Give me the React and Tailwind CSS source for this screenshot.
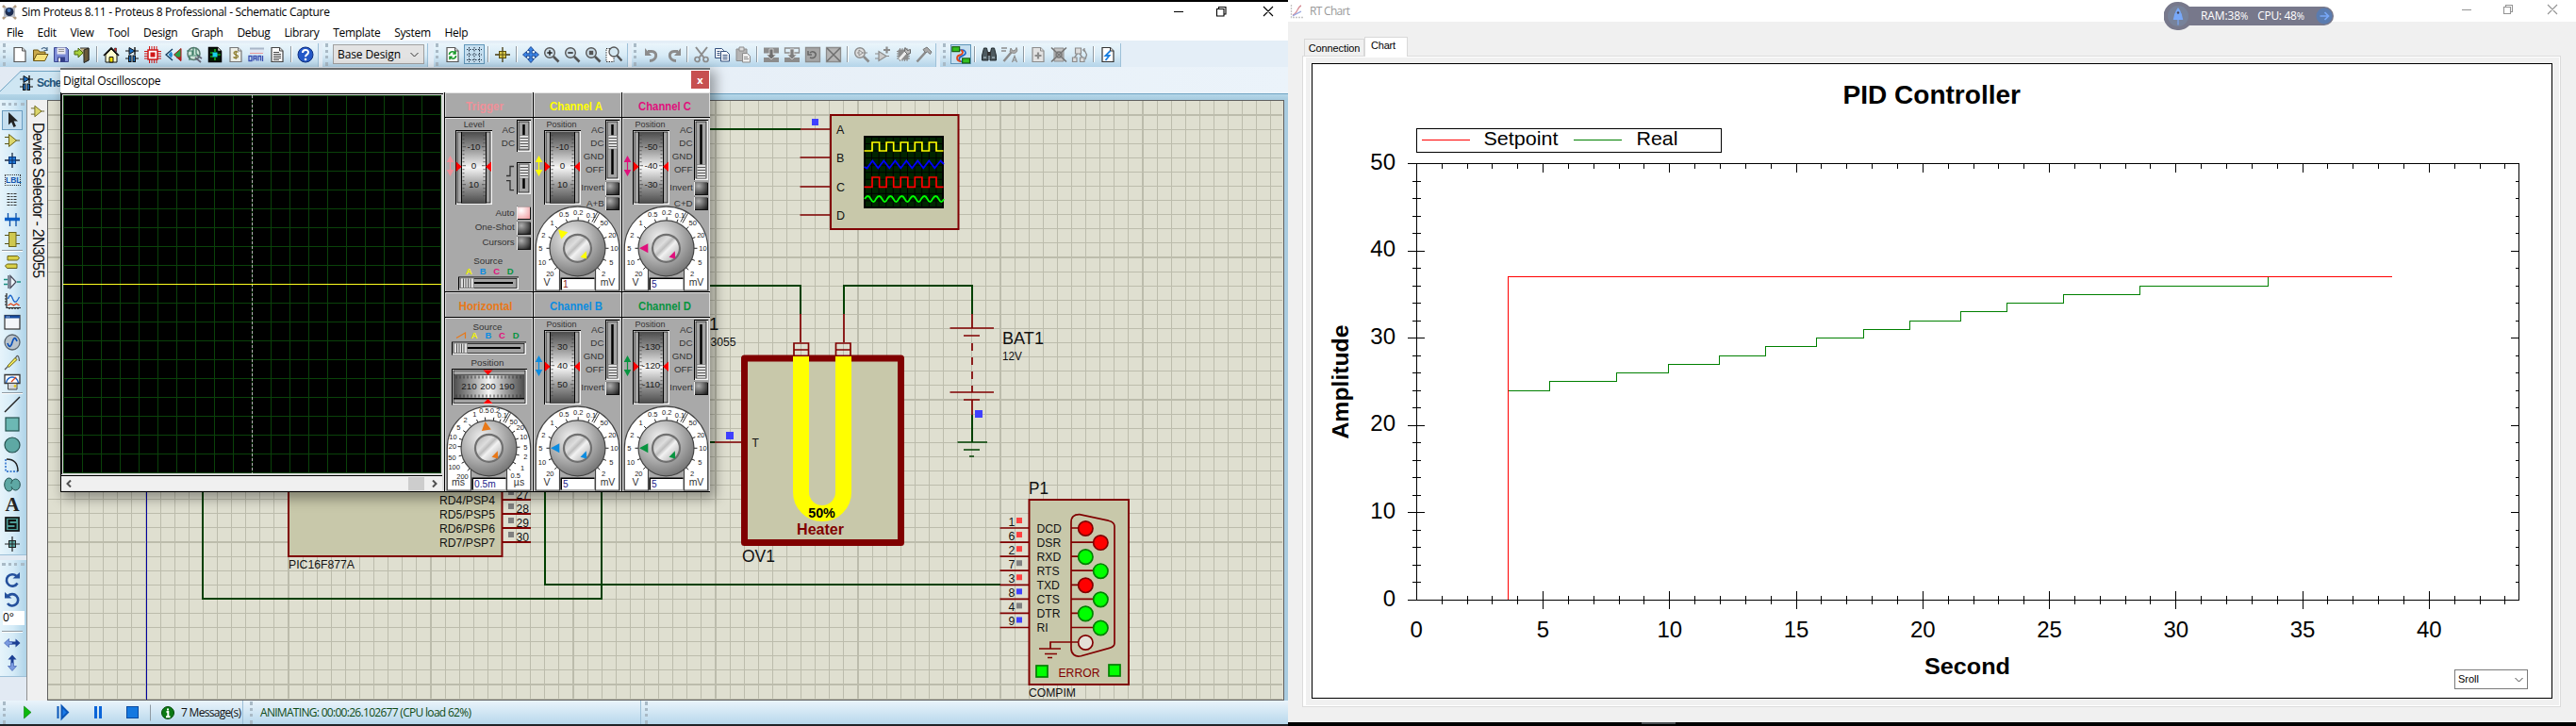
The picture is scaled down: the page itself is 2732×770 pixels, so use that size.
import React from "react";

const SANS = "font-['Liberation_Sans',sans-serif]";
const UI = "font-['Open_Sans',sans-serif]";

/* ---------- small helpers ---------- */

function Ico({ children, className = "", s = 18 }) {
  return (
    <svg width={s} height={s} viewBox="0 0 18 18" fill="none" className={"shrink-0 " + className}>
      {children}
    </svg>
  );
}

const G = "#8c8c8c";
const Loupe = ({ c = "#555", f = "#cfe0ea", children }) => (
  <Ico>
    <circle cx="7" cy="7" r="5.3" fill={f} stroke={c} strokeWidth="1.4" />
    <path d="M11 11l5.5 5.5" stroke={c} strokeWidth="2.6" />
    {children}
  </Ico>
);
const Page = ({ stroke = "#555", fill = "#fff", children }) => (
  <Ico>
    <path d="M3 1.5h8.5l3.5 3.5v11.5h-12z" fill={fill} stroke={stroke} strokeWidth="1.2" />
    <path d="M11.5 1.5v3.5h3.5" stroke={stroke} fill="#ddd" />
    {children}
  </Ico>
);
const DiodeCap = () => (
  <Ico>
    <path d="M2 5h14M2 13h4M12 13h4" stroke="#111" />
    <path d="M6 1.5l6 3.5-6 3.500z" fill="#1a6fc4" stroke="#111" />
    <path d="M12 1v8" stroke="#111" strokeWidth="1.4" />
    <rect x="5.500" y="10" width="2.500" height="6.500" fill="#1a6fc4" stroke="#111" />
    <rect x="10" y="10" width="2.500" height="6.500" fill="#1a6fc4" stroke="#111" />
  </Ico>
);

const icons = {
  new: <Page />,
  open: (
    <Ico>
      <path d="M1.500 15V4h5l1.500 2h6v3" fill="#c9a94a" stroke="#6b5413" />
      <path d="M1.500 15.500l3.500-7h12l-3.500 7z" fill="#f6e27c" stroke="#6b5413" />
      <path d="M10 3c2-2 4-2 6 1m0-3v3.500h-3.500" stroke="#4a6a8a" strokeWidth="1.200" />
    </Ico>
  ),
  save: (
    <Ico>
      <path d="M1.500 1.500h13l2 2v13h-15z" fill="#7c8cd6" stroke="#3a4690" />
      <rect x="4.500" y="1.500" width="9" height="7" fill="#e8e8f0" />
      <path d="M6 3.500h6M6 5.500h6" stroke="#999" />
      <rect x="5" y="11.500" width="8" height="5" fill="#333f88" />
      <rect x="6" y="12.500" width="2" height="4" fill="#eee" />
    </Ico>
  ),
  exit: (
    <Ico>
      <path d="M7 2h9v13h-4" fill="#c9b98a" stroke="#333" />
      <path d="M11 4l5-2v13l-5 2.500z" fill="#6b5a3a" stroke="#222" />
      <path d="M1 5h4V2l5 5-5 5V9H1z" fill="#a6d13c" stroke="#4c6a12" />
    </Ico>
  ),
  home: (
    <Ico>
      <path d="M3 9v8h12V9L9 3z" fill="#ffffd0" stroke="#111" />
      <path d="M1 10l8-8 8 8" stroke="#111" strokeWidth="1.700" />
      <path d="M12.500 2h2v4l-2-2z" fill="#d22" stroke="#111" strokeWidth=".5" />
      <path d="M7 17v-5.500h4V17z" fill="#ffe200" stroke="#111" />
    </Ico>
  ),
  diode: <DiodeCap />,
  chip: (
    <Ico>
      <path d="M5.500 0v4M8 0v4M10.500 0v4M13 0v4M5.500 14v4M8 14v4M10.500 14v4M13 14v4M0 5.500h4M0 8h4M0 10.500h4M0 13h4M14 5.500h4M14 8h4M14 10.500h4M14 13h4" stroke="#d01818" />
      <rect x="4" y="4" width="10" height="10" fill="#fff" stroke="#d01818" strokeWidth="1.500" />
      <rect x="6.500" y="6.500" width="5" height="5" fill="#d01818" />
    </Ico>
  ),
  view3d: (
    <Ico>
      <path d="M8 3L1 9l7 6" stroke="#123a5a" strokeWidth="1.300" />
      <path d="M6.500 5.500c2 2 2 5 0 7l-3-3.500z" fill="#2a8ad0" />
      <path d="M17 2.500v13L9.500 9z" fill="#2aa04a" stroke="#a11" />
      <path d="M17 11v5l-5-4z" fill="#b02020" />
    </Ico>
  ),
  globe: (
    <Ico>
      <circle cx="8.500" cy="8" r="6.500" fill="#cfe6da" stroke="#5a7a70" strokeWidth="1.500" />
      <path d="M1 5h6v5H4v5M7 10h8M8 1v8M11 2v6l4 3" stroke="#3d7d66" strokeWidth="1.200" />
      <path d="M10 12l6 5M12 10l5 3" stroke="#667" strokeWidth="1.800" />
    </Ico>
  ),
  board: (
    <Ico>
      <path d="M2.500 1.500h9l4 4v11h-13z" fill="#041a04" stroke="#000" strokeWidth="1.500" />
      <path d="M12 1l3.500 4H12z" fill="#fff" stroke="#111" strokeWidth=".7" />
      <path d="M4 7h3M4 11h3M11 9h4M9 3v3M9 12v3" stroke="#1be01b" strokeWidth="1.200" />
      <rect x="6.500" y="6.500" width="5" height="5" fill="#18d0e8" />
    </Ico>
  ),
  dollar: (
    <Page stroke="#777" fill="#eef0ea">
      <path d="M11.500 6.500c-1-1.300-4.500-1.300-4.500.8 0 2.200 4.500 1.300 4.500 3.500 0 2-3.500 2.200-5 .7M9.200 4.700v9" stroke="#8b7a2a" strokeWidth="1.200" />
    </Page>
  ),
  code: (
    <Ico>
      <path d="M2 2h15v5H2z" fill="#dde6f2" />
      <path d="M2 2.500h15" stroke="#a9b6c8" strokeWidth="2" />
      <path d="M2 7.500h14" stroke="#e89a9a" />
      <path d="M1 10.500h3v5h-3zM6 15.500v-5h3v5M11 15.500v-5h2.500v5M15.500 10v6M6 13h3" stroke="#3a4fb0" strokeWidth="1.300" />
    </Ico>
  ),
  text: (
    <Page stroke="#444">
      <path d="M5 6.500h6M5 8.500h8M5 10.500h8M5 12.500h8M5 14.500h6" stroke="#444" />
    </Page>
  ),
  help: (
    <Ico>
      <circle cx="9" cy="9" r="8" fill="#2458c8" stroke="#0d2f80" />
      <path d="M6 7c0-4 6-4 6-.5C12 9 9 8.700 9 11.300" stroke="#fff" strokeWidth="2" />
      <circle cx="9" cy="14" r="1.300" fill="#fff" />
    </Ico>
  ),
  refresh: (
    <Page>
      <path d="M5.500 9c0-3.500 4-4 6-2m.5-2v3H9.300M12.500 10c0 3.500-4 4-6 2m-.5 2.200v-3h2.700" stroke="#1a9a2a" strokeWidth="1.600" />
    </Page>
  ),
  grid: (
    <Ico>
      <path d="M3.500 1v16M9 1v16M14.500 1v16M1 3.500h16M1 9h16M1 14.500h16" stroke="#234" strokeDasharray="1.500 1.500" />
    </Ico>
  ),
  origin: (
    <Ico>
      <path d="M9 1v16M1 9h16" stroke="#443a10" strokeWidth="1.300" />
      <rect x="5.500" y="5.500" width="7" height="7" fill="#d8c84a" stroke="#5a4e10" />
      <path d="M9 5v8M5 9h8" stroke="#5a4e10" />
    </Ico>
  ),
  pan: (
    <Ico>
      <path d="M9 .5l3.500 4h-2.300v3.300h3.300V5.500l4 3.500-4 3.500v-2.300h-3.300v3.300h2.300L9 17.500l-3.500-4h2.300v-3.300H4.500v2.300L.5 9l4-3.500v2.300h3.300V4.500H5.500z" fill="#3a86e8" stroke="#173f8a" strokeWidth=".9" />
    </Ico>
  ),
  zin: <Loupe><path d="M4.300 7h5.400M7 4.300v5.400" stroke="#222" strokeWidth="1.500" /></Loupe>,
  zout: <Loupe><path d="M4.300 7h5.400" stroke="#222" strokeWidth="1.500" /></Loupe>,
  zall: <Loupe><rect x="4.800" y="4.800" width="4.400" height="4.400" fill="#555" /></Loupe>,
  zarea: (
    <Ico>
      <path d="M1 2.500h8v14h-8z" fill="#fff" stroke="#222" strokeDasharray="1.300 1.300" />
      <circle cx="9" cy="6" r="5" fill="#d5e8f2" stroke="#555" strokeWidth="1.300" />
      <path d="M12.500 10l5 5.500" stroke="#555" strokeWidth="2.500" />
    </Ico>
  ),
  undo: <Ico><path d="M6 15.500c8 0 9-10 2-10H4" stroke={G} strokeWidth="3" /><path d="M1 2v8h7z" fill={G} /></Ico>,
  redo: <Ico><path d="M12 15.500c-8 0-9-10-2-10h4" stroke={G} strokeWidth="3" /><path d="M17 2v8h-7z" fill={G} /></Ico>,
  cut: (
    <Ico>
      <path d="M3 1l8.500 11M15 1L6.500 12" stroke={G} strokeWidth="2" />
      <circle cx="4.500" cy="14" r="2.500" stroke={G} strokeWidth="1.700" />
      <circle cx="13.500" cy="14" r="2.500" stroke={G} strokeWidth="1.700" />
    </Ico>
  ),
  copy: (
    <Ico>
      <path d="M1.500 2.500h7l2 2v8h-9z" fill="#f4f6fa" stroke="#34507c" />
      <path d="M7.500 5.500h6l3 3v7.500h-9z" fill="#f4f6fa" stroke="#34507c" />
      <path d="M3.500 5.500h3M3.500 7.500h3M3.500 9.500h3M9.500 9.500h5M9.500 11.500h5M9.500 13.500h5" stroke="#34507c" />
    </Ico>
  ),
  paste: (
    <Ico>
      <path d="M2 3h11v12.500h-11z" fill="#b4b4b4" stroke={G} />
      <path d="M5 1h5v4h-5z" fill="#ddd" stroke={G} />
      <path d="M8.500 7.500h5l3 3v6.500h-8z" fill="#eee" stroke={G} />
      <path d="M10 11.500h4M10 13.500h5" stroke={G} />
    </Ico>
  ),
  blkcopy: <Ico><path d="M1 1.500h16v6H1zM1 12h16v5H1z" fill={G} /><path d="M7 3h4v6h3l-5 5-5-5h3z" fill="#6f6f6f" stroke="#ddd" strokeWidth=".8" /></Ico>,
  blkmove: <Ico><path d="M1.500 2h15v5H1.500z" stroke={G} strokeWidth="1.300" /><path d="M1 12h16v5H1z" fill={G} /><path d="M7 3h4v6h3l-5 5-5-5h3z" fill="#7f7f7f" stroke="#ddd" strokeWidth=".8" /></Ico>,
  blkrot: <Ico><path d="M1.500 1.500h15v15h-15z" fill="#a6a6a6" stroke={G} strokeWidth="1.300" /><path d="M6 7c3-3 7 0 6 3s-4 3-6 2M4 5v4h4" stroke="#666" strokeWidth="1.500" /></Ico>,
  blkdel: <Ico><path d="M1.500 1.500h15v15h-15z" fill="#b4b4b4" stroke={G} strokeWidth="1.300" /><path d="M2 2l14 14M16 2L2 16" stroke="#6f6f6f" strokeWidth="1.500" /></Ico>,
  pick: <Loupe c={G} f="#ddd"><path d="M4 7h2M6 4v6l4-3zM10 7h5" stroke={G} /></Loupe>,
  make: <Ico><path d="M1 8h4M1 13h4M5 5.500v10l8-5zM13 10.500h3" fill="#ccc" stroke={G} strokeWidth="1.200" /><path d="M10 4h7M13.500 .5v7" stroke={G} strokeWidth="2.200" /></Ico>,
  pack: <Ico><path d="M4 4h10v10h-10z" fill={G} stroke={G} /><path d="M2 5.500h14M2 8h14M2 10.500h14M2 13h14M5.500 2v14M8 2v14M10.500 2v14M13 2v14" stroke={G} /><path d="M5 14l8-9" stroke="#eee" strokeWidth="3" /><path d="M11 1.500l2.500 3 3-1v4l-3 1-3-3z" fill="#bbb" stroke="#666" /></Ico>,
  hammer: <Ico><path d="M1.500 16.500l9-10" stroke={G} strokeWidth="2.600" /><path d="M8 3.500l4-2.500 5 5-1.500 2.500-3-2.500-2 1z" fill="#a8a8a8" stroke="#777" /></Ico>,
  wire: (
    <Ico s={20}>
      <path d="M5 4.500h5.500a3 3 0 013 3c0 3-6 2-6 5.500s2 2.500 5 2.500" stroke="#1a63c8" strokeWidth="1.500" />
      <path d="M9 5c3 0 2 4-1 4.500-3 .5-4 5 1 6" stroke="#e0451a" strokeWidth="1.700" />
      <rect x=".8" y="1.500" width="7" height="4.500" fill="#33c020" stroke="#145a0c" />
      <rect x="10.500" y="12.500" width="7" height="4.500" fill="#33c020" stroke="#145a0c" />
    </Ico>
  ),
  find: (
    <Ico>
      <path d="M3.500 2h3l1.500 7v6h-6.500v-5zM14.500 2h-3L10 9v6h6.500v-5z" fill="#4d5a60" stroke="#22292d" />
      <path d="M7 6h4v4H7z" fill="#333" />
      <path d="M3 12h3M12 12h3" stroke="#9fb0b8" strokeWidth="1.500" />
    </Ico>
  ),
  prop: <Ico><path d="M0 2h6M0 5h5" stroke={G} strokeWidth="1.300" /><path d="M2.500 16l8-9.500" stroke={G} strokeWidth="2.500" /><path d="M10 2l2 3 3-1 1-2.500c2 3 0 6.500-3.500 6L9 6z" fill="#aaa" stroke={G} /><path d="M11.500 17l2.500-6.500 2.500 6.500M12.500 15h3" stroke={G} strokeWidth="1.200" /></Ico>,
  addp: <Page stroke={G} fill="#e2e2e2"><path d="M5.500 10h7M9 6.500v7" stroke={G} strokeWidth="2.200" /></Page>,
  delp: <Ico><path d="M4 2h10v14H4z" fill="#c4c4c4" stroke={G} /><circle cx="9" cy="9" r="3" stroke="#777" strokeWidth="1.500" /><path d="M1 1.500l16 15M17 1.500l-16 15" stroke="#777" strokeWidth="1.700" /></Ico>,
  tree: <Ico><path d="M4.500 2h6v6h-6zM1.500 12h4.500v4.500h-4.500zM9.500 12h4.500v4.500h-4.500z" fill="#ddd" stroke={G} strokeWidth="1.200" /><path d="M6.500 8l-3 4M9 8l3 4M12 4h2l2.500 5-1.500 5M14 2v4" stroke={G} strokeWidth="1.300" /></Ico>,
  flash: <Page stroke="#333"><path d="M11.500 5l-5 5h4l-4 5" stroke="#1a7fe0" strokeWidth="1.800" /></Page>,
  // side bar
  arrow: <Ico><path d="M5 1v13.500l3.200-3 2.300 5.500 2.500-1.200-2.400-5.200H15z" fill="#222" /></Ico>,
  amp: <Ico><path d="M1 5.500h5M1 12.500h5M12 9h5" stroke="#5a5414" /><path d="M5.500 2.500v13l8-6.500z" fill="#dcd66a" stroke="#6b6418" /></Ico>,
  junc: <Ico><path d="M9 1v16M1 9h16" stroke="#1b2a44" strokeWidth="1.300" /><rect x="5.500" y="5.500" width="7" height="7" fill="#1f78d8" stroke="#0c3c80" /><path d="M9 5v8M5 9h8" stroke="#0c2c60" /></Ico>,
  script: <Ico><path d="M3.500 3.500h11M3.500 6.500h11M3.500 9.500h11M3.500 12.500h11M3.500 15.500h11" stroke="#333" strokeDasharray="3 1 2 1" /></Ico>,
  bus: <Ico><path d="M1 8.500h16" stroke="#0c60c8" strokeWidth="3.500" /><path d="M4.500 2v6M13 2v6M6.500 9v7M13 9v7" stroke="#0c50a8" strokeWidth="1.300" /></Ico>,
  sub: <Ico><path d="M1 4.500h5M1 13.500h5M12 4.500h5M12 13.500h5" stroke="#555014" /><rect x="5.500" y="1.500" width="7.500" height="15" fill="#cfc84e" stroke="#6b6418" /></Ico>,
  term: <Ico><path d="M4 2.500h10.500l2 2-2 2.500H4zM14 11h-10.500l-2 2 2 2.500h10.500z" fill="#d8d048" stroke="#6b6418" /></Ico>,
  pin: <Ico><path d="M0 6.500h4M0 11.500h4M14 9h4" stroke="#1a8f80" strokeWidth="1.500" /><path d="M5 2v14M7 2.500v13l6-6.500z" stroke="#445" strokeWidth="1.200" fill="#eef6fa" /></Ico>,
  graph: <Ico><path d="M3 0v15.500h15M1 3h2M1 6h2M1 9h2M1 12h2M6 15v2M9 15v2M12 15v2M15 15v2" stroke="#222" strokeWidth="1.200" /><path d="M4.500 6c2-5 3-5 5 0s4 4 7-2" stroke="#1a63c8" strokeWidth="1.300" /><path d="M4.500 13l3-2 3 2 3-2 3 2" stroke="#e0451a" strokeWidth="1.300" /></Ico>,
  win: <Ico><rect x="1" y="1.500" width="16" height="14.500" fill="#f4f6fa" stroke="#333" strokeWidth="1.200" /><path d="M1 3h16" stroke="#174a9c" strokeWidth="3" /><path d="M3 3h4" stroke="#fff" strokeDasharray="1 1" /></Ico>,
  gen: <Ico><circle cx="9" cy="9" r="8" fill="#b9c3cb" stroke="#5a646c" strokeWidth="1.300" /><path d="M4 10c2 6 4 3 5-1s3-7 5-1" stroke="#0c50b8" strokeWidth="1.700" /></Ico>,
  probe: <Ico><path d="M1 17l4-4M12 6c2-5 4-5 4.500 2" stroke="#555" strokeWidth="1.200" /><path d="M4 13l8-8.500 2 2-8.500 8z" fill="#f0e85a" stroke="#6b6418" /></Ico>,
  meter: <Ico><path d="M1 1.500h16v9H1z" fill="#fff" stroke="#333" strokeWidth="1.300" /><path d="M2.500 10c2-8 11-8 13 0" stroke="#1a63c8" strokeWidth="1.300" /><path d="M8 9l5-5" stroke="#e0451a" strokeWidth="1.300" /><path d="M4.500 10.500h9.500v6.500h-9.500z" fill="#d4d8dc" stroke="#444" /><circle cx="12" cy="13.500" r="1.400" fill="#e0c820" /></Ico>,
  line: <Ico><path d="M1 17L17 1" stroke="#222" strokeWidth="1.500" /></Ico>,
  rect: <Ico><rect x="2" y="2" width="14" height="14" fill="#6cb8b4" stroke="#24504e" strokeWidth="1.200" /></Ico>,
  circ: <Ico><circle cx="9" cy="9" r="8" fill="#5ea8a4" stroke="#24504e" strokeWidth="1.200" /></Ico>,
  arc: <Ico><path d="M2 3v13h13" stroke="#1a63c8" strokeWidth="1.400" strokeDasharray="2 1.500" /><path d="M3 3c8 0 12 5 12 13" stroke="#222" strokeWidth="1.400" /></Ico>,
  blob: <Ico><ellipse cx="5.500" cy="9" rx="4.800" ry="7" fill="#5ea8a4" stroke="#24504e" /><ellipse cx="12.500" cy="9" rx="4.800" ry="6" fill="#5ea8a4" stroke="#24504e" /><path d="M7 8h4v3H7z" fill="#5ea8a4" /></Ico>,
  sym: <Ico><rect x="2" y="2" width="14" height="14" fill="#4c9a94" stroke="#111" strokeWidth="1.700" /><path d="M13 5H5.500v4H12.500v4H4.500" stroke="#111" strokeWidth="2" /></Ico>,
  mark: <Ico><path d="M9 1v16M1 9h16" stroke="#222" strokeWidth="1.200" /><rect x="5.500" y="5.500" width="7" height="7" fill="#5ea8a4" stroke="#222" /><path d="M9 5v8M5 9h8" stroke="#222" /></Ico>,
  cw: <Ico><path d="M13.500 5A6.200 6.200 0 1014.500 12.500" stroke="#24509c" strokeWidth="2.600" /><path d="M9.500 7.500h7.500V1z" fill="#24509c" /></Ico>,
  ccw: <Ico><path d="M4.500 5A6.200 6.200 0 1 1 4 13" stroke="#24509c" strokeWidth="2.600" /><path d="M8.500 7.500H1V1z" fill="#24509c" /></Ico>,
  flipx: <Ico><path d="M.5 9l5-4.500v3H9v3H5.500v3z" fill="#7a9ae0" stroke="#4060b0" strokeWidth=".7" /><path d="M17.500 9l-5-4.500v3H9v3h3.500v3z" fill="#1c3f94" /></Ico>,
  flipy: <Ico><path d="M9 .5l-4.500 5h3V9h3V5.500h3z" fill="#1c3f94" /><path d="M9 17.500l-4.500-5h3V9h3v3.500h3z" fill="#7a9ae0" stroke="#4060b0" strokeWidth=".7" /></Ico>,
};

/* ---------- toolbar ---------- */

const Grip = () => (
  <span className="h-[24px] w-[3px] shrink-0 self-center border-l-[3px] border-dotted border-[#a9bac6]" />
);
const Sep = ({ w = "w-[8px]" }) => (
  <span className={"flex h-full shrink-0 items-center justify-center " + w}>
    <span className="h-[17px] w-[2px] border-l border-[#8f9aa2] bg-white" />
  </span>
);
const Btn = ({ n, on }) => (
  <span
    className={
      "flex h-[21px] w-[22px] shrink-0 items-center justify-center " +
      (on ? "border border-[#5f95b8] bg-[#c5dff0]" : "")
    }
  >
    {icons[n]}
  </span>
);
const Group = ({ className, children }) => (
  <div
    className={
      "flex h-[25px] shrink-0 items-center border-r border-[#9dc0d8] bg-linear-to-b from-[#eaf5fb] via-[#d8ebf6] to-[#b4d4e9] pb-[2px] " +
      className
    }
  >
    {children}
  </div>
);
const run = (s) => s.split(" ").map((n) => <Btn key={n} n={n} />);

function Toolbars() {
  return (
    <div className="flex h-[28px] items-end bg-[#e4eef7]">
      <Group className="w-[338px] gap-0 pl-[3px]">
        <Grip />
        <span className="w-[4px]" />
        {run("new open save exit")}
        <Sep w="w-[9px]" />
        {run("home diode chip view3d globe board dollar code text")}
        <Sep />
        <Btn n="help" />
      </Group>
      <Group className="ml-[4px] w-[112px] pl-[3px]">
        <Grip />
        <div className="ml-[5px] flex h-[21px] w-[97px] items-center justify-between border border-[#a0a0a0] bg-[#e3e3e3] pr-[5px] pl-[4px]">
          <span className={UI + " text-[12px] tracking-[-0.100px] whitespace-nowrap text-black"}>Base Design</span>
          <svg width="9" height="6" viewBox="0 0 9 6" fill="none">
            <path d="M.5 1l4 4 4-4" stroke="#333" />
          </svg>
        </div>
      </Group>
      <Group className="ml-[6px] w-[206px] pl-[2px]">
        <Grip />
        <span className="w-[4px]" />
        <Btn n="refresh" />
        <span className="w-[1px]" />
        <Btn n="grid" on />
        <Sep />
        <Btn n="origin" />
        <Sep />
        {run("pan zin zout zall zarea")}
      </Group>
      <Group className="ml-[4px] w-[323px] pl-[2px]">
        <Grip />
        <span className="w-[6px]" />
        {run("undo redo")}
        <Sep />
        {run("cut copy paste")}
        <Sep />
        {run("blkcopy blkmove blkrot blkdel")}
        <Sep />
        {run("pick make pack hammer")}
      </Group>
      <Group className="ml-[4px] w-[192px] pl-[3px]">
        <Grip />
        <span className="w-[5px]" />
        <Btn n="wire" on />
        <Sep />
        {run("find prop")}
        <Sep />
        {run("addp delp tree")}
        <Sep />
        <Btn n="flash" />
      </Group>
    </div>
  );
}

/* ---------- schematic ---------- */

const MAR = "#800000";
const GRN = "#004000";
const BODY = "#c8c8aa";
const range = (n) => Array.from({ length: n }, (_, i) => i);

const T = ({ x, y, s = 12.3, c = "#111", b, a, w, children }) => (
  <text
    x={x}
    y={y}
    fontSize={s}
    fill={c}
    fontWeight={b ? 700 : 400}
    textAnchor={a}
    {...(w ? { textLength: w, lengthAdjust: "spacingAndGlyphs" } : {})}
  >
    {children}
  </text>
);

function Schematic() {
  const ox = 51;
  const oy = 107;
  const vx = range(90).map((i) => [155 + 15.1 * (i - 6), (i - 6) % 10 === 0]).filter(([x]) => x > 51 && x < 1361);
  const hy = range(43).map((i) => [122 + 15.1 * (i - 1), (i - 1) % 10 === 0]).filter(([y]) => y < 742);
  const pins = [
    ["1", "DCD", "#ff4040", 0, "#f00"],
    ["6", "DSR", "#ff4040", 1, "#f00"],
    ["2", "RXD", "#ff4040", 0, "#0f0"],
    ["7", "RTS", "#808080", 1, "#0f0"],
    ["3", "TXD", "#ff4040", 0, "#f00"],
    ["8", "CTS", "#4040ff", 1, "#0f0"],
    ["4", "DTR", "#808080", 0, "#0f0"],
    ["9", "RI", "#4040ff", 1, "#0f0"],
  ];
  const sq = (base, top) => {
    let d = `M916.500 ${base}`;
    range(5).forEach((i) => {
      const u = 925 + i * 15.100;
      d += `H${u}V${top}h7.600V${base}`;
    });
    return d + "H1000.500";
  };
  return (
    <svg width="1310" height="635" viewBox={`${ox} ${oy} 1310 635`} className={SANS + " block"} fill="none">
      <rect x={ox} y={oy} width="1310" height="635" fill="#dfdfd0" />
      <g shapeRendering="crispEdges">
        {vx.map(([x, t]) => (
          <rect key={x} x={Math.round(x - (t ? 1 : 0.5))} y={oy} width={t ? 2 : 1} height="635" fill="#bcbcac" />
        ))}
        {hy.map(([y, t]) => (
          <rect key={y} x={ox} y={Math.round(y - (t ? 1 : 0.5))} width="1309" height={t ? 2 : 1} fill="#bcbcac" />
        ))}
      </g>

      {/* wires */}
      <path d="M155.500 500V742" stroke="#0000a0" />
      <g stroke={GRN} strokeWidth="2">
        <path d="M740 137H849M740 303H849V333M895 333V303H1031V333M1031 440V469M740 469H758" />
        <path d="M215 500V635H638V500M578 500V620H1061" />
        <path d="M1015.500 469H1047M1022 477H1039M1028 484H1033" strokeWidth="1.700" />
      </g>
      <g stroke={MAR} strokeWidth="1.700">
        <path d="M849 137H880M848.500 167H880M848.500 198H880M848.500 228H880" />
        <path d="M849 333V363M895 333V363M1031 333V348M1007.500 348H1054M1022 356H1039M1007.500 416H1054M1022 424H1039M1031 424V440" />
        <path d="M1031 364v8M1031 379v8M1031 394v8M1031 409v7M758 469H787" />
      </g>
      <g fill="#4040ff">
        <rect x="861" y="126" width="7" height="7" />
        <rect x="1034" y="435" width="8" height="8" />
        <rect x="770" y="458" width="8" height="8" />
      </g>

      {/* scope symbol */}
      <rect x="881" y="122" width="135.500" height="121" fill={BODY} stroke={MAR} strokeWidth="2" />
      {["A", "B", "C", "D"].map((l, i) => (
        <T key={l} x="887" y={142 + i * 30.300} s={12.500}>{l}</T>
      ))}
      <rect x="917" y="145" width="83" height="75" fill="#002400" stroke="#000" strokeWidth="2" />
      <path
        d={range(10).map((i) => `M${924.500 + i * 7.600} 145v75`).join("") + range(9).map((i) => `M917 ${152.500 + i * 7.550}h83`).join("")}
        stroke="#000"
      />
      <path d={sq(160, 151)} stroke="#ff0" strokeWidth="1.700" />
      <path d={"M916.500 177l3 1.500" + range(6).map((i) => `L${925.300 + i * 12} 170.500L${931.300 + i * 12} 178.300`).join("") + "L997.500 170.500L1001 174"} stroke="#00f" strokeWidth="1.800" />
      <path d={sq(198.300, 188)} stroke="#f00" strokeWidth="1.700" />
      <path d={"M917 211" + range(7).map(() => "q3.500 -6 6.500 0t5.500 0").join("")} stroke="#0f0" strokeWidth="1.800" />

      {/* controller */}
      <rect x="306" y="480" width="226.500" height="110" fill={BODY} stroke={MAR} strokeWidth="2" />
      {["RD4/PSP4", "RD5/PSP5", "RD6/PSP6", "RD7/PSP7"].map((l, i) => (
        <g key={l}>
          <T x="466" y={534.500 + i * 15} w={59}>{l}</T>
          <path d={`M532 ${530 + i * 15}h31`} stroke={MAR} strokeWidth="2" />
          <rect x="539" y={519 + i * 15} width="6" height="6" fill="#808080" />
          <T x="547.500" y={528.500 + i * 15} w={13.500}>{27 + i}</T>
        </g>
      ))}
      <T x="306" y="603" w={70}>PIC16F877A</T>

      {/* transistor label */}
      <T x="752" y="350" s={18.500}>1</T>
      <T x="753.500" y="366.500" w={27}>3055</T>

      {/* battery label */}
      <T x="1063" y="365" s={18.500} w={44}>BAT1</T>
      <T x="1063" y="382" w={21}>12V</T>

      {/* heater */}
      <rect x="789.500" y="380" width="166" height="195.500" fill={BODY} stroke={MAR} strokeWidth="7" strokeLinejoin="round" />
      <path d="M842 377v-13h15.500v13M842 371h15.500M886.500 377v-13h15.500v13M886.500 371h15.500" stroke={MAR} strokeWidth="1.700" />
      <path d="M849.500 378V522A22.500 22.500 0 0 0 894.500 522V378" stroke="#ff0" strokeWidth="17" />
      <T x="871.500" y="548.700" s={14.300} b a="middle" c="#000">50%</T>
      <T x="870" y="567" s={16} b a="middle" c={MAR}>Heater</T>
      <T x="797.500" y="473.500" s={12}>T</T>
      <T x="787" y="595.700" s={18.500} w={35}>OV1</T>

      {/* serial port */}
      <T x="1091" y="524" s={18.500} w={21}>P1</T>
      <rect x="1091.500" y="530" width="105.500" height="196" fill={BODY} stroke={MAR} strokeWidth="2" />
      <path
        d="M1136 554c0-6 3-8.500 9-8.300l30.500 6.500c4 1 6.500 3 6.500 6v124c0 3-3 4.500-5.500 5.200l-30 8.300c-6 1.500-10.500-2-10.500-8z"
        stroke={MAR}
        strokeWidth="1.700"
      />
      {pins.map(([n, l, c, r, f], i) => {
        const y = 560 + i * 15.070;
        const cx = r ? 1167.300 : 1151.300;
        return (
          <g key={n}>
            <path d={`M1060.500 ${y}H1091M1136 ${y}H${cx}`} stroke={MAR} strokeWidth="1.700" />
            <T x="1069.500" y={y - 2}>{n}</T>
            <rect x="1078" y={y - 11} width="6" height="6" fill={c} />
            <T x="1099.500" y={y + 4.700} s={12.200}>{l}</T>
            <circle cx={cx} cy={y + 0.500} r="7.700" fill={f} stroke={f === "#f00" ? MAR : "#008000"} strokeWidth="1.700" />
          </g>
        );
      })}
      <path d="M1144 681H1114V688M1102 688H1125M1108 693.500H1121M1111 697.500H1116" stroke={MAR} strokeWidth="1.700" />
      <circle cx="1151.300" cy="681.500" r="7.700" fill="#e4e0d8" stroke={MAR} strokeWidth="1.700" />
      <rect x="1099" y="706" width="12" height="12" fill="#0f0" stroke="#008000" strokeWidth="1.700" />
      <rect x="1176" y="705" width="12" height="12" fill="#0f0" stroke="#008000" strokeWidth="1.700" />
      <T x="1122.500" y="718" c={MAR} w={44}>ERROR</T>
      <T x="1091" y="739" w={50}>COMPIM</T>
    </svg>
  );
}

/* ---------- oscilloscope ---------- */

const INK = "#333";

function PanelBase({ title, color, children, tw = 56, tx = 46 }) {
  return (
    <svg width="94" height="212" viewBox="0 0 94 212" className={SANS + " block"} fill="none">
      <defs>
        <linearGradient id="wheelV" x1="0" x2="0" y1="0" y2="1">
          <stop offset="0" stopColor="#4c4c4c" />
          <stop offset=".25" stopColor="#9a9a9a" />
          <stop offset=".5" stopColor="#f6f6f6" />
          <stop offset=".75" stopColor="#9a9a9a" />
          <stop offset="1" stopColor="#4c4c4c" />
        </linearGradient>
        <linearGradient id="wheelH">
          <stop offset="0" stopColor="#4c4c4c" />
          <stop offset=".25" stopColor="#9a9a9a" />
          <stop offset=".5" stopColor="#f6f6f6" />
          <stop offset=".75" stopColor="#9a9a9a" />
          <stop offset="1" stopColor="#4c4c4c" />
        </linearGradient>
        <radialGradient id="knob" cx=".38" cy=".32" r=".75">
          <stop offset="0" stopColor="#f2f2f2" />
          <stop offset=".5" stopColor="#b2b2b2" />
          <stop offset="1" stopColor="#6e6e6e" />
        </radialGradient>
        <linearGradient id="cap" x1="0" y1="0" x2="1" y2="1">
          <stop offset="0" stopColor="#a8a8a8" />
          <stop offset=".35" stopColor="#dedede" />
          <stop offset=".45" stopColor="#bdbdbd" />
          <stop offset=".55" stopColor="#f2f2f2" />
          <stop offset="1" stopColor="#9a9a9a" />
        </linearGradient>
        <radialGradient id="btn" cx=".3" cy=".3" r=".9">
          <stop offset="0" stopColor="#b0b0b0" />
          <stop offset="1" stopColor="#222" />
        </radialGradient>
        <radialGradient id="lit" cx=".3" cy=".3" r=".9">
          <stop offset="0" stopColor="#fff" />
          <stop offset="1" stopColor="#f0a0a4" />
        </radialGradient>
      </defs>
      <rect width="94" height="212" fill="#a9a9a9" />
      <path d="M1.500 0V212M93.500 0V212" stroke="#dcdcdc" />
      <path d="M.5 0V212M0 211.500H94M0 26.500H94" stroke="#000" />
      <path d="M1.500 27.500H93M1.500 .5H93" stroke="#e2e2e2" />
      <T x={tx} y="18.500" s={13} b a="middle" c={color} w={tw}>{title}</T>
      {children}
    </svg>
  );
}

const Lbl = ({ x, y, children, a = "end", w }) => <T x={x} y={y} s={9.800} c={INK} a={a} w={w}>{children}</T>;

const PushBtn = ({ y, lit }) => (
  <g>
    <rect x="77" y={y} width="15" height="14.500" fill="#111" />
    <path d={`M77.500 ${y + 14.500}V${y + 0.500}H92`} stroke="#eee" />
    <rect x="78" y={y + 1} width="13" height="12.500" fill={lit ? "url(#lit)" : "url(#btn)"} />
  </g>
);

const Frame = ({ x, y, w, h }) => (
  <g>
    <rect x={x} y={y} width={w} height={h} fill="#000" />
    <rect x={x + 1} y={y + 1} width={w - 1} height={h - 1} fill="#f4f4f4" />
    <rect x={x + 2} y={y + 2} width={w - 4} height={h - 4} fill="#a4a4a4" stroke="#111" strokeWidth=".8" />
  </g>
);

const VSwitch = ({ y, h, hy }) => (
  <g>
    <Frame x={77} y={y} w={15} h={h} />
    <path d={`M84.500 ${y + 5}V${y + h - 6}`} stroke="#000" strokeWidth="2.500" />
    <rect x="80" y={hy} width="9.500" height="14.500" fill="#e0e0e0" stroke="#777" strokeWidth=".7" />
    <path d={`M80.500 ${hy + 3}h8.500M80.500 ${hy + 6}h8.500M80.500 ${hy + 9}h8.500M80.500 ${hy + 12}h8.500`} stroke="#555" />
  </g>
);

const HSwitch = ({ x, y, w }) => (
  <g>
    <Frame x={x} y={y} w={w} h={14} />
    <path d={`M${x + 6} ${y + 6.500}H${x + w - 6}`} stroke="#000" strokeWidth="2" />
    <rect x={x + 2.500} y={y + 1.500} width="14" height="10.500" fill="#e0e0e0" stroke="#777" strokeWidth=".7" />
    <path d={`M${x + 5.500} ${y + 2}v9.500M${x + 8} ${y + 2}v9.500M${x + 10.500} ${y + 2}v9.500M${x + 13} ${y + 2}v9.500`} stroke="#555" />
  </g>
);

const Wheel = ({ color, vals }) => (
  <g>
    <Frame x={12} y={40} w={39} h={79} />
    <rect x="18" y="42" width="27" height="75.500" fill="#000" />
    <rect x="19" y="42" width="25" height="75.500" fill="url(#wheelV)" />
    <path
      d={range(17).map((i) => `M19.500 ${45.700 + i * 4}h${i % 5 === 3 ? 3.500 : 2}M43.500 ${45.700 + i * 4}h${i % 5 === 3 ? -3.500 : -2}`).join("")}
      stroke="#444"
      strokeWidth=".8"
    />
    {vals.map((v, i) => (
      <T key={v} x="31.500" y={60.500 + i * 20} s={9.800} a="middle" c="#1a1a1a">{v}</T>
    ))}
    <path d="M12.700 73.500v10.500l6-5.200zM50 73.500v10.500l-6-5.200z" fill="#f00" />
    <path d="M6.500 72v13" stroke={color} strokeWidth="1.200" />
    <path d="M6.500 67l-3.800 7h7.600zM6.500 89l-3.800-7h7.600z" fill={color} />
  </g>
);

const VOLT = [
  ["20", 18.300, 192.300], ["10", 10, 180.700], ["5", 8.300, 165.300], ["2", 11.300, 151.300], ["1", 20.700, 138.700],
  ["0.5", 33.300, 129.300], ["0.2", 48.300, 127], ["0.1", 62, 130], ["50", 75.700, 138.300], ["20", 84.300, 151.300],
  ["10", 86.500, 165.300], ["5", 83.300, 180.700], ["2", 75, 192],
];
const TIME = [
  ["200", 19.500, 195], ["100", 10.700, 185.700], ["50", 8.500, 175.700], ["20", 9, 163.300], ["10", 9.500, 153.300],
  ["5", 15.300, 143.300], ["2", 22.700, 135.300], ["1", 32.300, 129.700], ["0.5", 42.500, 125.700], ["0.2", 54, 125.700],
  ["0.1", 61.700, 130.700], ["50", 73.700, 137.700], ["20", 80.700, 143.300], ["10", 84.300, 153.300], ["5", 86.300, 164],
  ["2", 86.300, 174.300], ["1", 83, 186], ["0.5", 75.700, 194.300],
];

function Knob({ color, marks, ang, left, right, value, vc }) {
  const cx = 47.500;
  const cy = 165.300;
  const a0 = (ang * Math.PI) / 180;
  const px = cx + 23 * Math.cos(a0);
  const py = cy + 23 * Math.sin(a0);
  return (
    <g>
      <path d="M3.300 210V165.300A44.200 44.200 0 0 1 91.700 165.300V210H66.500V188H28.500V210Z" fill="#fff" stroke="#444" strokeWidth="1.200" />
      <path d="M28.500 188H66.500V211H28.500Z" fill="#a9a9a9" />
      <path d="M28.500 186V210.500M66.500 186V210.500" stroke="#444" />
      {marks.map(([t, x, y], i) => {
        const a = Math.atan2(y - cy, x - cx);
        return (
          <g key={i}>
            <path
              d={`M${cx + 29 * Math.cos(a)} ${cy + 29 * Math.sin(a)}L${cx + 33 * Math.cos(a)} ${cy + 33 * Math.sin(a)}`}
              stroke="#222"
            />
            <text x={x} y={y + 2.700} fontSize="7.500" textAnchor="middle" fill="#222">{t}</text>
          </g>
        );
      })}
      <path d="M62.800 137.500L68.500 127.300M64.800 138.500L70.500 128.300" stroke="#222" strokeWidth=".9" />
      <circle cx={cx} cy={cy} r="29.500" fill="url(#knob)" stroke="#444" strokeWidth="1.200" />
      <circle cx={cx} cy={cy} r="14.500" fill="url(#cap)" stroke="#707070" strokeWidth="2.200" />
      <path d="M-5.500 0L3.800 -5V5Z" transform={`translate(${px} ${py}) rotate(${ang + 180})`} fill={color} />
      <path d="M-4.500 2L1.800 -4.500L2.200 3.800Z" transform={`translate(${cx + 7.500} ${cy + 7.500})`} fill={color} />
      <rect x="29.500" y="196.500" width="36" height="13" fill="#000" />
      <rect x="31" y="198" width="34.500" height="11.500" fill="#fff" />
      <T x="32" y="207.300" s={10.200} c={vc}>{value}</T>
      <T x="15" y="205" s={10.500} a="middle" c={INK}>{left}</T>
      <T x="79.500" y="205" s={10.500} a="middle" c={INK}>{right}</T>
    </g>
  );
}

function Channel({ name, color, vals, sum, handle, ang, value, vc = "#22228a" }) {
  return (
    <PanelBase title={`Channel ${name}`} color={color}>
      <Lbl x={14.500} y={37} a="start" w={32}>Position</Lbl>
      <Wheel color={color} vals={vals} />
      {["AC", "DC", "GND", "OFF"].map((l, i) => (
        <Lbl key={l} x={75.500} y={43 + i * 14}>{l}</Lbl>
      ))}
      <VSwitch y={29} h={64} hy={handle} />
      <Lbl x={75.700} y={104}>Invert</Lbl>
      <PushBtn y={94.500} />
      {sum && <Lbl x={75.700} y={120.500}>{sum}</Lbl>}
      {sum && <PushBtn y={110.500} />}
      <Knob color={color} marks={VOLT} ang={ang} left="V" right="mV" value={value} vc={vc} />
    </PanelBase>
  );
}

const CH = [["A", "#f4f400"], ["B", "#0c8ce0"], ["C", "#e0107c"], ["D", "#089440"]];

function Trigger() {
  return (
    <PanelBase title="Trigger" color="#f09098" tw={40} tx={43}>
      <Lbl x={20.700} y={37} a="start" w={22}>Level</Lbl>
      <Wheel color="#f09098" vals={["-10", "0", "10"]} />
      <Lbl x={75} y={43}>AC</Lbl>
      <Lbl x={75} y={57}>DC</Lbl>
      <VSwitch y={29} h={34} hy={45.500} />
      <VSwitch y={74} h={34} hy={76.500} />
      <path d="M66 88.500h4v-10h4M66 93.700h4v10h4" stroke={INK} strokeWidth="1.300" />
      <Lbl x={74.700} y={131}>Auto</Lbl>
      <PushBtn y={120.500} lit />
      <Lbl x={74.700} y={146}>One-Shot</Lbl>
      <PushBtn y={136.500} />
      <Lbl x={74.700} y={162}>Cursors</Lbl>
      <PushBtn y={152.500} />
      <Lbl x={46.700} y={182} a="middle">Source</Lbl>
      {CH.map(([l, c], i) => (
        <T key={l} x={26.500 + i * 14.600} y={193} s={9.500} b a="middle" c={c}>{l}</T>
      ))}
      <HSwitch x={15} y={195.500} w={64} />
    </PanelBase>
  );
}

function Horizontal() {
  return (
    <PanelBase title="Horizontal" color="#e87818" tw={57} tx={44}>
      <Lbl x={46} y={40} a="middle">Source</Lbl>
      <path d="M13 48.500L22.500 43V49" stroke="#e87818" strokeWidth="1.200" />
      {CH.map(([l, c], i) => (
        <T key={l} x={32.300 + i * 14.600} y={49} s={9.500} b a="middle" c={c}>{l}</T>
      ))}
      <HSwitch x={8} y={52.500} w={79} />
      <Lbl x={46} y={78} a="middle">Position</Lbl>
      <Frame x={8} y={81} w={80} h={38.500} />
      <rect x="10" y="87.500" width="75" height="26" fill="#000" />
      <rect x="10" y="88" width="75" height="24" fill="url(#wheelH)" />
      <path d={range(18).map((i) => `M${13 + i * 4} 88.500v3M${13 + i * 4} 111.500v-3`).join("")} stroke="#333" strokeWidth=".9" />
      {["210", "200", "190"].map((v, i) => (
        <T key={v} x={26.500 + i * 20} y={102.500} s={9.800} a="middle" c="#1a1a1a">{v}</T>
      ))}
      <path d="M41.500 82.500h10l-5 5zM41.500 118h10l-5-5z" fill="#f00" />
      <Knob color="#e87818" marks={TIME} ang={-98} left="ms" right="µs" value="0.5m" vc="#22228a" />
    </PanelBase>
  );
}

function Scope() {
  const lines = range(21).map((i) => 0.500 + i * 20);
  return (
    <div className="absolute top-[70px] left-[64px] flex h-[450px] w-[689px] flex-col border-t-2 border-[#6a6e70] bg-white shadow-[4px_5px_12px_2px_rgba(0,0,0,0.35)]">
      <div className="flex h-[24px] shrink-0 items-start justify-between pr-[1px] pl-[3px]">
        <span className={UI + " pt-[3px] text-[12px] leading-[17px] tracking-[-0.250px] whitespace-nowrap text-black"}>
          Digital Oscilloscope
        </span>
        <span className={UI + " mt-[1px] flex h-[19px] w-[19px] items-center justify-center bg-[#c75050] text-[11px] leading-none font-bold text-white"}>
          x
        </span>
      </div>
      <div className="flex h-[424px]">
        <div className="flex w-[407px] shrink-0 flex-col border-b border-l border-[#000] bg-[#dcdcdc]">
          <div className="mt-[1px] mr-[1px] h-[404px] border-t border-l border-black pt-[1px] pl-[1px]">
            <svg width="401" height="401" viewBox="0 0 401 401" fill="none" className="block">
              <rect width="401" height="401" fill="#000" />
              <path d={lines.map((v) => `M${v} 0V401M0 ${v}H401`).join("")} stroke="#0a420a" />
              <path d="M200.500 0V401" stroke="#b4b4b4" strokeDasharray="3 2" />
              <path d="M0 200.500H401" stroke="#ffff20" />
            </svg>
          </div>
          <div className="mt-[1px] mr-[2px] flex h-[16px] items-center justify-between border-t border-black bg-[#f0f0f0] px-[5px]">
            <svg width="6" height="8" viewBox="0 0 6 8" fill="none"><path d="M5 .5L1.500 4 5 7.500" stroke="#505050" strokeWidth="2" /></svg>
            <span className="ml-auto mr-[8px] h-[14px] w-[17px] bg-[#cdcdcd]" />
            <svg width="6" height="8" viewBox="0 0 6 8" fill="none"><path d="M1 .5L4.500 4 1 7.500" stroke="#505050" strokeWidth="2" /></svg>
          </div>
        </div>
        <div className="grid w-[282px] grid-cols-3">
          <Trigger />
          <Channel name="A" color="#ffff00" vals={["-10", "0", "10"]} sum="A+B" handle={45.500} ang={224} value="1" vc="#8a2222" />
          <Channel name="C" color="#e0107c" vals={["-50", "-40", "-30"]} sum="C+D" handle={76.500} ang={180} value="5" />
          <Horizontal />
          <Channel name="B" color="#0c8ce0" vals={["30", "40", "50"]} handle={76.500} ang={180} value="5" />
          <Channel name="D" color="#089440" vals={["-130", "-120", "-110"]} handle={76.500} ang={180} value="5" />
        </div>
      </div>
    </div>
  );
}

/* ---------- Proteus window ---------- */

const SideBtn = ({ n, on }) => (
  <span className={"flex h-[21.200px] w-[22px] shrink-0 items-center justify-center " + (on ? "border border-[#6a9cc0] bg-[#c5dff0]" : "")}>
    {icons[n]}
  </span>
);
const SideSep = ({ h }) => (
  <span className={"flex w-[22px] shrink-0 items-center " + h}>
    <span className="h-[2px] w-full border-t border-[#8f9aa2] bg-white" />
  </span>
);
const side = (s) => s.split(" ").map((n) => <SideBtn key={n} n={n} />);
const SIDE = "flex w-[28px] flex-col items-start bg-linear-to-r from-[#e6f4fb] via-[#d5ebf7] to-[#aed3e8] pl-[2px]";

function SideBar() {
  return (
    <div className="flex w-[28px] shrink-0 flex-col bg-[#e2eaf3]">
      <div className={SIDE + " h-[483px] border-b border-[#9dc0d8]"}>
        <span className="mt-[3px] h-[3px] w-[24px] border-t-[3px] border-dotted border-[#a9bac6]" />
        <span className="h-[5px]" />
        <SideBtn n="arrow" on />
        {side("amp junc")}
        <span className="flex h-[21.200px] w-[22px] items-center justify-center">
          <span className={SANS + " ml-[1px] w-[17px] border border-dotted border-[#333] text-center text-[8.500px] leading-[10px] font-bold text-[#1555b0]"}>
            LBL
          </span>
        </span>
        {side("script bus sub")}
        <SideSep h="h-[3px]" />
        {side("term pin graph win gen probe meter")}
        <SideSep h="h-[3px]" />
        {side("line rect circ arc blob")}
        <span className="flex h-[21.200px] w-[22px] items-center justify-center">
          <span className="font-['Liberation_Serif',serif] text-[21px] leading-none font-bold text-[#222]">A</span>
        </span>
        {side("sym mark")}
      </div>
      <div className={SIDE + " mt-[5px] h-[124px] border-b border-[#9dc0d8]"}>
        <span className="mt-[3px] h-[3px] w-[24px] border-t-[3px] border-dotted border-[#a9bac6]" />
        <span className="h-[4px]" />
        {side("cw ccw")}
        <span className={UI + " mt-[2px] ml-[1px] h-[15px] w-[23px] bg-white text-[12px] leading-[13px] text-black"}>0°</span>
        <span className="h-[5px]" />
        <SideSep h="h-[3px]" />
        {side("flipx flipy")}
      </div>
    </div>
  );
}

function Proteus() {
  return (
    <div className="relative flex h-[768px] w-[1366px] shrink-0 flex-col overflow-hidden border-t-2 border-black bg-white">
      <div className="flex h-[25px] shrink-0 items-start justify-between pr-[14px] pl-[2px]">
        <div className="flex items-center pt-[2px]">
          <svg width="16" height="16" viewBox="0 0 16 16" fill="none">
            <path d="M1 1l4 4M15 1l-4 4M1 15l4-4M15 15l-4-4" stroke="#b09a80" strokeWidth="2.500" />
            <path d="M2 3h12v10H2z" fill="#b8bcc4" />
            <circle cx="8" cy="7.500" r="4.500" fill="#1c2c50" />
            <circle cx="7.500" cy="6" r="2" fill="#4a78b8" />
          </svg>
          <span className={UI + " ml-[5px] text-[12px] leading-[18px] tracking-[-0.300px] whitespace-nowrap text-black"}>
            Sim Proteus 8.11 - Proteus 8 Professional - Schematic Capture
          </span>
        </div>
        <svg width="108" height="20" viewBox="0 0 108 20" fill="none" stroke="#000" strokeWidth="1.100">
          <path d="M1 10.500h10M96 5l10 10M106 5l-10 10M46.500 7.500h7.500v7.500h-7.500zM48.500 7.500v-2h7.500v7.500h-2" />
        </svg>
      </div>
      <div className={UI + " flex h-[16px] shrink-0 items-center gap-[14.800px] pl-[7px] text-[12px] leading-[16px] tracking-[-0.300px] text-black"}>
        {"File Edit View Tool Design Graph Debug Library Template System Help".split(" ").map((m) => (
          <span key={m}>{m}</span>
        ))}
      </div>
      <Toolbars />
      <div className="relative flex h-[29px] shrink-0 items-end bg-linear-to-r from-[#e2eaf3] to-[#ebf3fa]">
        <svg width="170" height="29" viewBox="0 0 170 29" className="absolute top-0 left-0" fill="none">
          <path d="M0 26L22 4.500H170V29H0Z" fill="#cfe6f3" />
          <path d="M0 26L22 4.500H170" stroke="#6fa3c2" />
        </svg>
        <div className="relative flex items-center gap-[2px] pb-[3px] pl-[19px]">
          {icons.diode}
          <span className={SANS + " text-[12px] leading-[16px] font-bold tracking-[-0.800px] text-[#24567c]"}>Sche</span>
        </div>
        <div className="ml-auto h-[1px] w-[1301px] bg-[#6fa3c2]" />
      </div>
      <div className="h-[6px] shrink-0 bg-linear-to-b from-[#b4d6e8] to-[#a6cbe0]" />
      <div className="flex h-[637px] shrink-0 bg-[#a9cce0]">
        <SideBar />
        <div className="flex w-[22px] shrink-0 flex-col items-center border-l border-[#909090] bg-[#f0f0f0] pt-[4px]">
          <Ico s={16}>{icons.amp.props.children}</Ico>
          <span className={SANS + " mt-[4px] text-[16px] leading-[20px] tracking-[-0.750px] whitespace-nowrap text-[#111] [writing-mode:vertical-rl]"}>
            Device Selector - 2N3055
          </span>
        </div>
        <div className="h-[637px] w-[1312px] border border-[#606060]">
          <Schematic />
        </div>
      </div>
      <div className={UI + " flex h-[25px] shrink-0 items-center bg-linear-to-b from-[#eaf4fb] to-[#b8d8ec] text-[12px] tracking-[-0.700px] whitespace-nowrap"}>
        <div className="flex h-full w-[258px] items-center border-r border-[#9dc0d8] pl-[3px]">
          <Grip />
          <svg width="150" height="20" viewBox="0 0 150 20" fill="none" className="ml-[7px]">
            <path d="M12.500 3v13l7.500-6.500z" fill="#0cb80c" stroke="#067a06" strokeWidth=".6" />
            <path d="M48.500 3v13M52.500 3v13l6.500-6.500z" stroke="#0a56b8" strokeWidth="2" fill="#1a7ae8" />
            <path d="M88.500 3v13M93.500 3v13" stroke="#0a64d8" strokeWidth="3" />
            <rect x="121.500" y="3.500" width="12" height="12" fill="#1478e0" stroke="#0a4aa0" />
            <path d="M146.500 1.500v17" stroke="#8f9aa2" />
          </svg>
          <svg width="14" height="14" viewBox="0 0 14 14" className="ml-[8px] shrink-0">
            <circle cx="7" cy="7" r="6.500" fill="#0c7a14" stroke="#064a0a" />
            <path d="M7 2.500v2M5.500 6H7.300v5M5 11.300h4.500" stroke="#fff" strokeWidth="2" fill="none" />
          </svg>
          <span className="ml-[7px] text-[#111]">7 Message(s)</span>
        </div>
        <div className="ml-[5px] flex h-full w-[417px] items-center border-r border-[#9dc0d8] pl-[2px]">
          <Grip />
          <span className="ml-[8px] text-[#0e4a14]">ANIMATING: 00:00:26.102677 (CPU load 62%)</span>
        </div>
        <span className="w-[4px]" />
        <Grip />
      </div>
      <Scope />
    </div>
  );
}

/* ---------- RT Chart window ---------- */

function Chart() {
  const X = (v) => 1502.300 + 26.850 * v;
  const Y = (v) => 636.300 - 9.256 * v;
  let ticks = "";
  range(44).forEach((v) => {
    if (v === 0) return;
    const m = v % 5 === 0;
    ticks += `M${X(v)} 173.500v${m ? 9 : 5}M${X(v)} ${m ? 627 : 631.500}V${m ? 645.500 : 641}`;
  });
  range(26).forEach((i) => {
    const v = i * 2;
    const m = v % 10 === 0;
    ticks += `M${m ? 1493 : 1497.500} ${Y(v)}H${m ? 1511 : 1507}M${m ? 2663 : 2667.500} ${Y(v)}H2671.500`;
  });
  const steps = [1643, 1714.500, 1769.300, 1823, 1872.500, 1926.500, 1976, 2025, 2079, 2128.500, 2188.500, 2269.500, 2405.500];
  const snap = (n) => Math.floor(n) + 0.500;
  let d = `M1600 ${snap(Y(24))}`;
  steps.forEach((x, i) => {
    d += `H${snap(x)}V${snap(Y(25 + i))}`;
  });
  return (
    <svg width="1314" height="672" viewBox="1392 68 1314 672" className={SANS + " block"} fill="none">
      <T x="1954.500" y="110" s={27.500} b c="#000" w={188.500}>PID Controller</T>
      <rect x="1502.500" y="136.500" width="323" height="25" stroke="#000" shapeRendering="crispEdges" />
      <path d="M1508 148.500h51" stroke="#f00" shapeRendering="crispEdges" />
      <path d="M1669 148.500h51" stroke="#008000" shapeRendering="crispEdges" />
      <T x="1573.500" y="153.700" s={20.700} c="#000" w={79}>Setpoint</T>
      <T x="1735.500" y="153.700" s={20.700} c="#000" w={44}>Real</T>
      <g shapeRendering="crispEdges">
        <path d="M1493 173.500H2671.500V636.300M1502.500 173.500V636.500M1493 636.500H2672" stroke="#000" />
        <path d={ticks} stroke="#000" />
        <path d={d} stroke="#008000" />
        <path d="M1599.500 636V293.500H2537" stroke="#f00" />
      </g>
      {[0, 10, 20, 30, 40, 50].map((v) => (
        <T key={v} x="1480" y={Y(v) + 6.300} s={24} c="#000" a="end">{v}</T>
      ))}
      {[0, 5, 10, 15, 20, 25, 30, 35, 40].map((v) => (
        <T key={v} x={X(v)} y="675.700" s={24} c="#000" a="middle">{v}</T>
      ))}
      <T x="2041" y="715" s={24} b c="#000" w={91}>Second</T>
      <g transform="translate(1430 465.500) rotate(-90)">
        <T x="0" y="0" s={24} b c="#000" w={121}>Amplitude</T>
      </g>
    </svg>
  );
}

function RTChart() {
  return (
    <div className="relative flex h-[766px] w-[1366px] shrink-0 flex-col bg-[#f0f0f0]">
      <div className="flex h-[23px] shrink-0 items-start justify-between bg-white pr-[18px] pl-[2px]">
        <div className="flex items-center pt-[3px]">
          <svg width="15" height="16" viewBox="0 0 15 16" fill="none">
            <path d="M1.500 1v13.500H14.500" stroke="#c4c4c4" strokeWidth="1.300" strokeDasharray="2 1" />
            <path d="M3 12c5-1 5-9 9-10" stroke="#d89098" strokeWidth="1.300" />
            <path d="M3 13c4-3 6-3 9-5" stroke="#9aa8e0" strokeWidth="1.200" />
          </svg>
          <span className={UI + " ml-[6px] text-[12px] leading-[17px] tracking-[-0.700px] text-[#999]"}>RT Chart</span>
        </div>
        <svg width="104" height="20" viewBox="0 0 104 20" fill="none" stroke="#949494" strokeWidth="1.100">
          <path d="M1 10.500h10M92 5l10 10M102 5l-10 10M45.500 7.500h7v7h-7zM47.500 7.500v-2h7v7h-2" />
        </svg>
      </div>
      <div className={SANS + " flex h-[37px] shrink-0 items-end pl-[17px] text-[11px] text-black"}>
        <span className="flex h-[19px] w-[64px] items-center justify-center border border-b-0 border-[#d9d9d9] tracking-[-0.100px]">Connection</span>
        <span className="z-10 flex h-[21px] w-[46px] items-center border border-b-0 border-[#d9d9d9] bg-white pb-[3px] pl-[6px] tracking-[-0.200px]">
          Chart
        </span>
      </div>
      <div className="mt-[-1px] ml-[15px] h-[691px] w-[1335px] border border-[#dcdcdc] bg-white p-[1px]">
        <div className="h-full w-full border-l-2 border-white bg-[#f0f0f0] pt-[6px] pl-[6px]">
          <div className="relative h-[674px] w-[1316px] border border-black bg-white">
            <Chart />
            <div className={SANS + " absolute right-[25px] bottom-[9px] flex h-[21px] w-[78px] items-center justify-between border border-[#7a7a7a] bg-white pr-[4px] pl-[3px] text-[11px] text-black"}>
              <span>Sroll</span>
              <svg width="9" height="6" viewBox="0 0 9 6" fill="none"><path d="M.5 1l4 4 4-4" stroke="#444" /></svg>
            </div>
          </div>
        </div>
      </div>
      <div className={UI + " absolute top-[2px] left-[929px] flex h-[30px] w-[182px] items-center"}>
        <svg width="182" height="31" viewBox="0 0 182 31" className="absolute top-0 left-0" fill="none">
          <path d="M15 0a15 15 0 00-1 30c6 0 10-2 13-5h143a10 10 0 000-20H27C24 2 20 0 15 0z" fill="#77788b" />
          <circle cx="15" cy="15" r="11" fill="#77829a" />
          <path d="M15 6c3.500 4 4 8 3.500 12h-7C11 14 11.500 10 15 6z" fill="#78a8f8" />
          <path d="M12 12.500l-1.500 6h9l-1.500-6M15 18v6.500" fill="#78a8f8" stroke="#78a8f8" strokeWidth="1.200" />
          <circle cx="15" cy="11.500" r="1.200" fill="#445" />
          <circle cx="170" cy="15" r="8.500" fill="#5a7cb0" />
          <path d="M165.500 15h8.500M170.500 11l4 4-4 4" stroke="#78a8f8" strokeWidth="1.700" />
        </svg>
        <span className="relative ml-[39px] text-[12px] tracking-[-0.100px] whitespace-nowrap text-white">
          RAM:38<span className="text-[10px]">%</span>
        </span>
        <span className="relative ml-[10px] text-[12px] tracking-[-0.300px] whitespace-nowrap text-white">
          CPU: 48<span className="text-[10px]">%</span>
        </span>
      </div>
    </div>
  );
}

export default function App() {
  return (
    <div className="flex h-[770px] w-[2732px] items-start overflow-hidden bg-[#202428]">
      <Proteus />
      <div className="flex h-[770px] flex-col bg-black">
        <RTChart />
        <div className="ml-[375px] h-[2px] w-[36px] bg-[#4a4e52]" />
      </div>
    </div>
  );
}
